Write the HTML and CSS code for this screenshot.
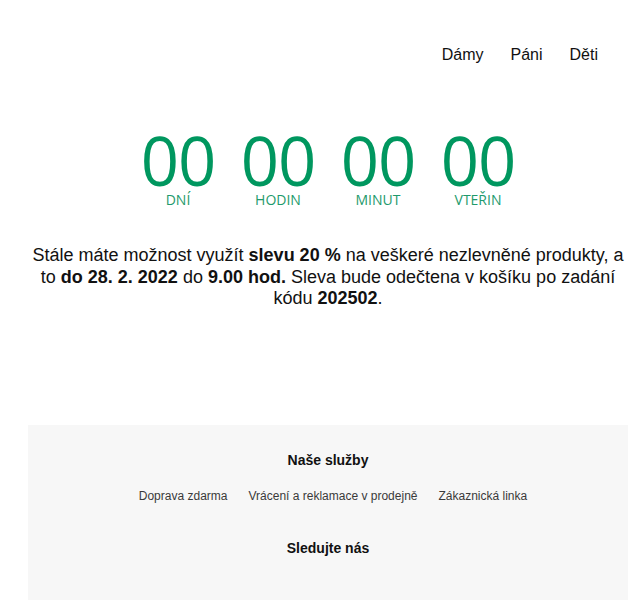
FILE: index.html
```html
<!DOCTYPE html>
<html lang="cs">
<head>
<meta charset="utf-8">
<title>Akce</title>
<link rel="stylesheet" href="styles.css">
</head>
<body>
<div class="page">
  <nav class="nav">
    <a href="#">Dámy</a>
    <a href="#">Páni</a>
    <a href="#">Děti</a>
  </nav>
  <div class="countdown">
    <div class="unit"><span class="num">00</span><span class="lbl">DNÍ</span></div>
    <div class="unit"><span class="num">00</span><span class="lbl">HODIN</span></div>
    <div class="unit"><span class="num">00</span><span class="lbl">MINUT</span></div>
    <div class="unit"><span class="num">00</span><span class="lbl">VTEŘIN</span></div>
  </div>
  <p class="promo">Stále máte možnost využít <b>slevu 20 %</b> na veškeré nezlevněné produkty, a to <b>do 28. 2. 2022</b> do <b>9.00 hod.</b> Sleva bude odečtena v košíku po zadání kódu <b>202502</b>.</p>
  <footer class="footer">
    <h3 class="ftitle">Naše služby</h3>
    <div class="links">
      <a href="#">Doprava zdarma</a>
      <a href="#">Vrácení a reklamace v prodejně</a>
      <a href="#">Zákaznická linka</a>
    </div>
    <h3 class="ftitle follow">Sledujte nás</h3>
  </footer>
</div>
</body>
</html>
```
FILE: styles.css
```css
html, body { margin: 0; padding: 0; background: #fff; }
body { font-family: "Liberation Sans", Arial, sans-serif; color: #111; }
.page { margin-left: 28px; width: 600px; }
.nav { display: flex; justify-content: flex-end; gap: 27px; padding: 46px 30px 0 0; height: 22px; font-size: 16px; }
.nav a { color: #111; text-decoration: none; }
.countdown { display: flex; justify-content: center; margin-top: 58px; }
.unit { width: 100px; display: flex; flex-direction: column; align-items: center; }
.num { font-family: "Open Sans", sans-serif; font-size: 67px; line-height: 68px; color: #00975f; letter-spacing: -1px; }
.lbl { font-family: "Open Sans", sans-serif; font-size: 14px; line-height: 18px; color: #1e9a6c; margin-top: -3px; }
.promo { margin: 36px 0 0; text-align: center; font-size: 18px; line-height: 21.5px; }
.footer { margin-top: 115px; background: #f7f7f7; padding: 25px 0 50px; text-align: center; font-family: "Liberation Sans", Arial, sans-serif; }
.ftitle { margin: 0; font-size: 14px; font-weight: 700; color: #111; line-height: 20px; }
.links { display: flex; justify-content: center; gap: 21px; margin-top: 19px; padding-left: 10px; font-size: 12px; }
.links a { color: #3a3a3a; text-decoration: none; }
.follow { margin-top: 35px; }
```
